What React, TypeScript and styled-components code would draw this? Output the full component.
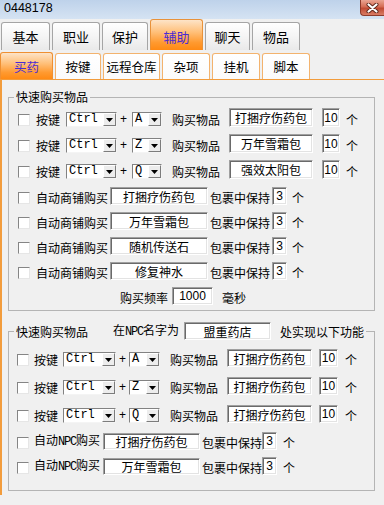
import React from 'react';
import styled, { createGlobalStyle } from 'styled-components';

const ORANGE = '#f29c3c';

const GlobalStyle = createGlobalStyle`
  html, body {
    margin: 0;
    padding: 0;
    background: #f0f0f0;
  }
  body {
    font-family: "Noto Sans CJK SC", "Noto Sans", sans-serif;
    font-size: 12px;
    color: #000;
  }
`;

const Window = styled.div`
  width: 384px;
  height: 505px;
  overflow: hidden;
  background: #f0f0f0;
`;

const TitleBar = styled.div`
  height: 19px;
  display: flex;
  justify-content: space-between;
  align-items: flex-start;
  background: linear-gradient(#bed2ea, #d5e3f3);
`;

const Title = styled.span`
  padding-left: 4px;
  font-family: "Liberation Sans", Arial, sans-serif;
  font-size: 12.5px;
  line-height: 17px;
`;

const CloseButton = styled.div`
  width: 24px;
  height: 16px;
  box-sizing: border-box;
  border: 1px solid #8e3b2b;
  border-top: none;
  border-right: none;
  border-radius: 0 0 0 4px;
  background: linear-gradient(#eaa593, #d56c54 45%, #c04a33 55%, #d97c64);
  display: flex;
  align-items: center;
  justify-content: center;
`;

const TabRow = styled.div`
  height: 31px;
  display: flex;
  align-items: flex-end;
  gap: 2px;
  padding-left: 1px;
`;

const activeFill = 'linear-gradient(#fde4c8, #ffc07a 40%, #ff9a30 75%, #ff8a14)';

const TopTab = styled.div<{ $w: number; $active?: boolean }>`
  width: ${(p) => p.$w}px;
  height: ${(p) => (p.$active ? 31 : 28)}px;
  box-sizing: border-box;
  padding-top: ${(p) => (p.$active ? 3 : 0)}px;
  border: 1px solid ${(p) => (p.$active ? '#e8923a' : '#a5a5a5')};
  border-bottom: none;
  border-radius: 3px 3px 0 0;
  background: ${(p) => (p.$active ? activeFill : 'linear-gradient(#ffffff, #f5f5f5 50%, #e9e9e9)')};
  color: ${(p) => (p.$active ? '#4a2bd4' : '#000')};
  font-size: 13px;
  display: flex;
  align-items: center;
  justify-content: center;
`;

const SubTabRow = styled.div`
  height: 29px;
  display: flex;
  align-items: flex-end;
  gap: 2px;
  border-bottom: 1px solid ${ORANGE};
`;

const SubTab = styled.div<{ $w: number; $active?: boolean }>`
  width: ${(p) => p.$w}px;
  height: ${(p) => (p.$active ? 27 : 26)}px;
  box-sizing: border-box;
  border: 1px solid ${(p) => (p.$active ? '#ef9032' : '#f3b36e')};
  border-bottom: none;
  border-radius: 3px 3px 0 0;
  background: ${(p) => (p.$active ? activeFill : 'linear-gradient(#ffffff, #fbfbfb)')};
  color: ${(p) => (p.$active ? '#4a2bd4' : '#000')};
  font-size: 12.5px;
  display: flex;
  align-items: center;
  justify-content: center;
`;

const Panel = styled.div`
  height: 415px;
  box-sizing: border-box;
  border-left: 2px solid ${ORANGE};
  padding: 10px 9px 0 6px;
`;

const Group = styled.fieldset<{ $pl: number; $pt: number; $pb: number; $mt?: number }>`
  margin: ${(p) => p.$mt ?? 0}px 0 0;
  padding: ${(p) => p.$pt}px 0 ${(p) => p.$pb}px ${(p) => p.$pl}px;
  border: 1px solid #b4b4b4;
  min-width: 0;
`;

const Legend = styled.legend<{ $ml: number }>`
  display: flex;
  align-items: center;
  margin-left: ${(p) => p.$ml}px;
  padding: 0 2px;
  line-height: 14px;
  white-space: nowrap;
`;

const Row = styled.div<{ $h: number; $pb: number; $pl?: number }>`
  height: ${(p) => p.$h}px;
  box-sizing: border-box;
  padding: 0 0 ${(p) => p.$pb}px ${(p) => p.$pl ?? 0}px;
  display: flex;
  align-items: flex-end;
  white-space: nowrap;
`;

const Text = styled.span<{ $ml?: number }>`
  margin-left: ${(p) => p.$ml ?? 0}px;
  line-height: 15px;
`;

const Narrow = styled.span`
  font-family: "Liberation Mono", monospace;
  font-size: 12px;
  letter-spacing: -1.2px;
`;

const Plus = styled.span<{ $ml: number }>`
  margin-left: ${(p) => p.$ml}px;
  font-family: "Liberation Sans", Arial, sans-serif;
  font-size: 12px;
  line-height: 15px;
`;

const CheckBox = styled.span`
  width: 12px;
  height: 12px;
  box-sizing: border-box;
  margin-bottom: 1px;
  background: #fff;
  border: 1px solid;
  border-color: #858585 #e6e6e6 #e6e6e6 #858585;
`;

const Field = styled.input<{ $w: number; $h: number; $ml?: number; $latin?: boolean }>`
  width: ${(p) => p.$w}px;
  height: ${(p) => p.$h}px;
  box-sizing: border-box;
  margin: 0 0 0 ${(p) => p.$ml ?? 0}px;
  padding: 0;
  border: 1px solid;
  border-color: #a0a0a0 #ffffff #ffffff #a0a0a0;
  box-shadow: inset 1px 1px 0 #6a6a6a, inset -1px -1px 0 #e3e3e3;
  background: #fff;
  text-align: center;
  font-family: ${(p) =>
    p.$latin ? '"Liberation Sans", Arial, sans-serif' : '"Noto Sans CJK SC", sans-serif'};
  font-size: 12px;
  color: #000;
  outline: none;
`;

const Combo = styled.div<{ $w: number; $ml: number }>`
  width: ${(p) => p.$w}px;
  height: 15px;
  box-sizing: border-box;
  margin-left: ${(p) => p.$ml}px;
  display: flex;
  background: #fff;
  border: 1px solid;
  border-color: #828282 #f4f4f4 #f4f4f4 #828282;
`;

const ComboText = styled.span`
  flex: 1;
  padding-left: 2px;
  font-family: "Liberation Mono", monospace;
  font-size: 12px;
  line-height: 13px;
`;

const ComboButton = styled.span`
  width: 13px;
  box-sizing: border-box;
  background: #ededed;
  border: 1px solid;
  border-color: #ffffff #7c7c7c #7c7c7c #ffffff;
  display: flex;
  align-items: center;
  justify-content: center;
`;

type KeyLayout = {
  lbl: number; c1: number; c1w: number; plus: number; c2: number; c2w: number;
  buy: number; inp: number; inpw: number; inph: number; cnt: number; cntw: number; unit: number;
};

type AutoLayout = { lbl: number; inp: number; inpw: number; inph: number; keep: number; cnt: number; cntw: number; unit: number };

const g1Key: KeyLayout = { lbl: 6, c1: 6, c1w: 51, plus: 3, c2: 5, c2w: 30, buy: 10, inp: 9, inpw: 84, inph: 19, cnt: 9, cntw: 18, unit: 6 };
const g2Key: KeyLayout = { lbl: 5, c1: 5, c1w: 53, plus: 3, c2: 3, c2w: 31, buy: 10, inp: 9, inpw: 85, inph: 18, cnt: 7, cntw: 19, unit: 7 };
const g1Auto: AutoLayout = { lbl: 6, inp: 2, inpw: 98, inph: 18, keep: 2, cnt: 2, cntw: 15, unit: 5 };
const g2Auto: AutoLayout = { lbl: 5, inp: 3, inpw: 97, inph: 17, keep: 2, cnt: 0, cntw: 15, unit: 6 };

const Arrow = () => (
  <svg width="7" height="4" viewBox="0 0 7 4">
    <polygon points="0,0 7,0 3.5,4" fill="#000" />
  </svg>
);

const Select = ({ value, w, ml }: { value: string; w: number; ml: number }) => (
  <Combo $w={w} $ml={ml}>
    <ComboText>{value}</ComboText>
    <ComboButton>
      <Arrow />
    </ComboButton>
  </Combo>
);

const KeyRow = ({ k, item, l, h, pb }: { k: string; item: string; l: KeyLayout; h: number; pb: number }) => (
  <Row $h={h} $pb={pb}>
    <CheckBox />
    <Text $ml={l.lbl}>按键</Text>
    <Select value="Ctrl" w={l.c1w} ml={l.c1} />
    <Plus $ml={l.plus}>+</Plus>
    <Select value={k} w={l.c2w} ml={l.c2} />
    <Text $ml={l.buy}>购买物品</Text>
    <Field readOnly value={item} $w={l.inpw} $h={l.inph} $ml={l.inp} />
    <Field readOnly value="10" $latin $w={l.cntw} $h={l.inph} $ml={l.cnt} />
    <Text $ml={l.unit}>个</Text>
  </Row>
);

const AutoRow = ({ label, item, l, h, pb }: { label: React.ReactNode; item: string; l: AutoLayout; h: number; pb: number }) => (
  <Row $h={h} $pb={pb}>
    <CheckBox />
    <Text $ml={l.lbl}>{label}</Text>
    <Field readOnly value={item} $w={l.inpw} $h={l.inph} $ml={l.inp} />
    <Text $ml={l.keep}>包裹中保持</Text>
    <Field readOnly value="3" $latin $w={l.cntw} $h={18} $ml={l.cnt} />
    <Text $ml={l.unit}>个</Text>
  </Row>
);

const topTabs = [
  { name: '基本', w: 49 },
  { name: '职业', w: 48 },
  { name: '保护', w: 46 },
  { name: '辅助', w: 53, active: true },
  { name: '聊天', w: 45 },
  { name: '物品', w: 48 },
];

const subTabs = [
  { name: '买药', w: 53, active: true },
  { name: '按键', w: 46 },
  { name: '远程仓库', w: 57 },
  { name: '杂项', w: 48 },
  { name: '挂机', w: 48 },
  { name: '脚本', w: 48 },
];

const quickKeys = [
  ['A', '打捆疗伤药包'],
  ['Z', '万年雪霜包'],
  ['Q', '强效太阳包'],
];
const shopItems = ['打捆疗伤药包', '万年雪霜包', '随机传送石', '修复神水'];
const npcKeys = [
  ['A', '打捆疗伤药包'],
  ['Z', '打捆疗伤药包'],
  ['Q', '打捆疗伤药包'],
];
const npcItems = ['打捆疗伤药包', '万年雪霜包'];

const App = () => (
  <>
    <GlobalStyle />
    <Window>
      <TitleBar>
        <Title>0448178</Title>
        <CloseButton>
          <svg width="13" height="10" viewBox="0 0 13 10">
            <path d="M2.5 1.5 L10.5 8.5 M10.5 1.5 L2.5 8.5" stroke="#5b2519" strokeWidth="4" strokeLinecap="round" />
            <path d="M2.5 1.5 L10.5 8.5 M10.5 1.5 L2.5 8.5" stroke="#fff" strokeWidth="2.2" strokeLinecap="round" />
          </svg>
        </CloseButton>
      </TitleBar>

      <TabRow>
        {topTabs.map((t) => (
          <TopTab key={t.name} $w={t.w} $active={t.active}>
            {t.name}
          </TopTab>
        ))}
      </TabRow>

      <SubTabRow>
        {subTabs.map((t) => (
          <SubTab key={t.name} $w={t.w} $active={t.active}>
            {t.name}
          </SubTab>
        ))}
      </SubTabRow>

      <Panel>
        <Group $pl={9} $pt={3} $pb={0}>
          <Legend $ml={-4}>快速购买物品</Legend>
          {quickKeys.map(([k, item]) => (
            <KeyRow key={k} k={k} item={item} l={g1Key} h={26} pb={6} />
          ))}
          {shopItems.map((item) => (
            <AutoRow key={item} label="自动商铺购买" item={item} l={g1Auto} h={25} pb={5} />
          ))}
          <Row $h={25} $pb={5} $pl={102}>
            <Text>购买频率</Text>
            <Field readOnly value="1000" $latin $w={41} $h={18} $ml={4} />
            <Text $ml={9}>毫秒</Text>
          </Row>
        </Group>

        <Group $pl={8} $pt={6} $pb={10} $mt={11}>
          <Legend $ml={-3}>
            <Text>快速购买物品</Text>
            <Text $ml={25}>
              在<Narrow>NPC</Narrow>名字为
            </Text>
            <Field readOnly value="盟重药店" $w={87} $h={18} $ml={5} />
            <Text $ml={9}>处实现以下功能</Text>
          </Legend>
          {npcKeys.map(([k, item]) => (
            <KeyRow key={k} k={k} item={item} l={g2Key} h={28} pb={7} />
          ))}
          {npcItems.map((item) => (
            <AutoRow
              key={item}
              label={
                <>
                  自动<Narrow>NPC</Narrow>购买
                </>
              }
              item={item}
              l={g2Auto}
              h={25}
              pb={5}
            />
          ))}
        </Group>
      </Panel>
    </Window>
  </>
);

export default App;
